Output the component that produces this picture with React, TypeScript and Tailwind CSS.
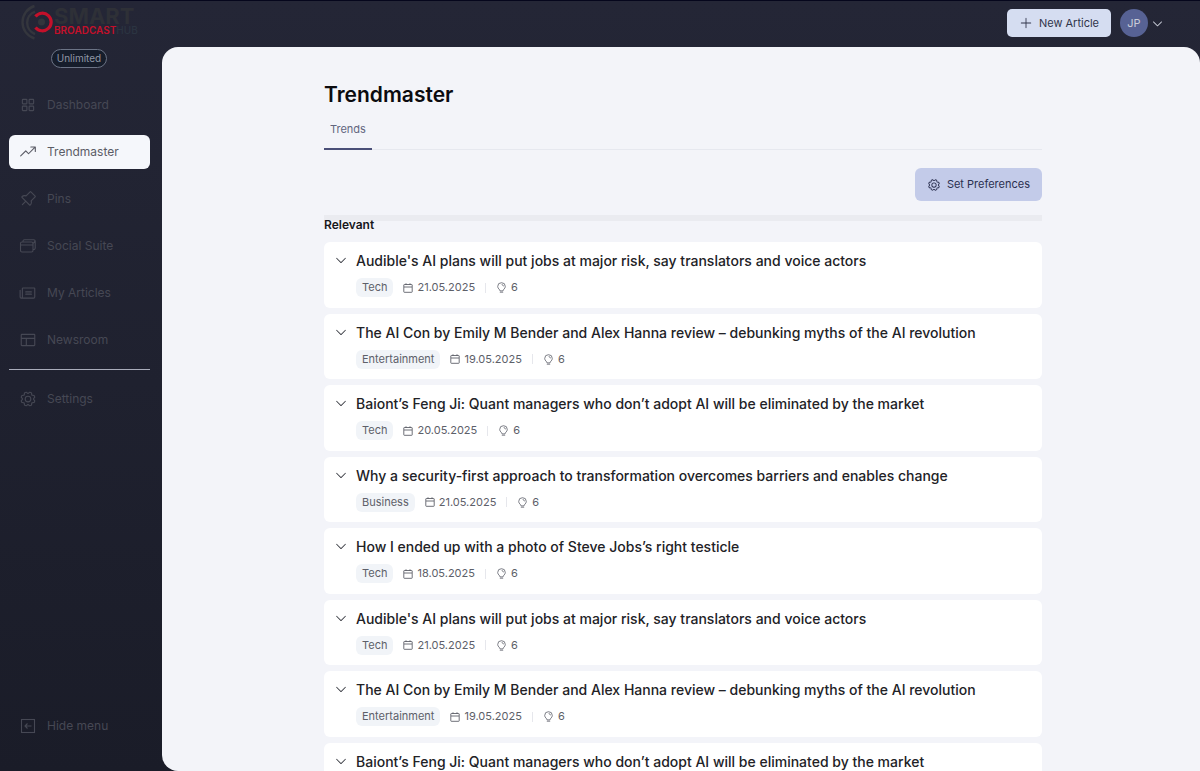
import type { ReactNode } from "react";
import {
  PiSquaresFour,
  PiTrendUp,
  PiPushPin,
  PiNewspaper,
  PiLayout,
  PiGear,
  PiPlus,
  PiCaretDown,
} from "react-icons/pi";

type Story = { title: string; category: string; date: string; count: number };

const audible: Story = {
  title: "Audible's AI plans will put jobs at major risk, say translators and voice actors",
  category: "Tech",
  date: "21.05.2025",
  count: 6,
};
const aiCon: Story = {
  title: "The AI Con by Emily M Bender and Alex Hanna review – debunking myths of the AI revolution",
  category: "Entertainment",
  date: "19.05.2025",
  count: 6,
};
const baiont: Story = {
  title: "Baiont’s Feng Ji: Quant managers who don’t adopt AI will be eliminated by the market",
  category: "Tech",
  date: "20.05.2025",
  count: 6,
};
const stories: Story[] = [
  audible,
  aiCon,
  baiont,
  {
    title: "Why a security-first approach to transformation overcomes barriers and enables change",
    category: "Business",
    date: "21.05.2025",
    count: 6,
  },
  { title: "How I ended up with a photo of Steve Jobs’s right testicle", category: "Tech", date: "18.05.2025", count: 6 },
  audible,
  aiCon,
  baiont,
];

function WindowsIcon() {
  return (
    <svg className="size-[18px]" viewBox="0 0 18 18" fill="none" stroke="currentColor" strokeWidth="1.1" strokeLinejoin="round" aria-hidden="true">
      <rect x="1.500" y="5" width="12.500" height="10" rx="1.500" />
      <path d="M4 5V4.200A1.500 1.500 0 0 1 5.500 2.700H14.700A1.500 1.500 0 0 1 16.200 4.200V11A1.500 1.500 0 0 1 14.700 12.500H14M1.500 8H14M14 6.500L16 4" />
    </svg>
  );
}

function CollapseIcon() {
  return (
    <svg className="size-[18px]" viewBox="0 0 18 18" fill="none" stroke="currentColor" strokeWidth="1.100" aria-hidden="true">
      <rect x="2.500" y="2.500" width="13" height="13" />
      <path d="M12.500 9H6M8.500 6.500L6 9l2.500 2.500" />
    </svg>
  );
}

function CalendarIcon() {
  return (
    <svg className="size-[10px]" viewBox="0 0 10 10" fill="none" stroke="currentColor" strokeWidth="0.9" aria-hidden="true">
      <rect x="0.800" y="1.500" width="8.400" height="7.800" rx="0.500" />
      <path d="M1 4H9M3 0.300V2M7 0.300V2" />
    </svg>
  );
}

function BulbIcon() {
  return (
    <svg className="size-[11px]" viewBox="0 0 11 11" fill="none" stroke="currentColor" strokeWidth="0.800" strokeLinecap="round" aria-hidden="true">
      <path d="M4 8.500C4 7.400 1.700 6.700 1.700 4.500A3.800 3.800 0 0 1 9.300 4.500C9.300 6.700 7 7.400 7 8.500ZM4.200 10.200H6.800M6 2.500A1.900 1.900 0 0 1 7.500 4" />
    </svg>
  );
}

function Logo() {
  return (
    <svg className="h-9 w-[118px] overflow-visible" viewBox="0 0 118 36" role="img" aria-label="Smart Broadcast Hub">
      <g fill="none" stroke="#34363d" strokeWidth="2.400">
        <path d="M13.500 1A17 17 0 0 0 13.500 33.500" />
        <path d="M14 6.500A12 12 0 0 0 14 29" />
      </g>
      <circle cx="20.500" cy="17" r="3.500" fill="#33353c" />
      <path d="M14.500 11.500A8.800 8.800 0 1 1 14.500 22.500" fill="none" stroke="#c4102a" strokeWidth="3.200" />
      <text x="33" y="19" fontFamily="Inter, sans-serif" fontSize="22" fontWeight="700" fill="#2e3037">
        SMART
      </text>
      <text x="33" y="29" fontFamily="Inter, sans-serif" fontSize="10" fontWeight="600" fill="#c4102a">
        BROADCAST
        <tspan fill="#2b3441" fontWeight="500">HUB</tspan>
      </text>
    </svg>
  );
}

function NavItem({ icon, label, active = false }: { icon: ReactNode; label: string; active?: boolean }) {
  return (
    <a
      href="#"
      aria-current={active ? "page" : undefined}
      className={
        active
          ? "flex h-[34px] items-center gap-2.5 rounded-md bg-[#f5f7fb] px-2.5 text-[12px] text-[#5b5c66]"
          : "flex h-[34px] items-center gap-2.5 rounded-md px-2.5 text-[12px] text-[#464854]"
      }
    >
      <span className="text-[18px]">{icon}</span>
      <span>{label}</span>
    </a>
  );
}

function StoryCard({ story }: { story: Story }) {
  return (
    <li className="flex gap-2 rounded-md bg-white px-2.5 py-2.5">
      <button type="button" aria-label={`Expand ${story.title}`} className="h-4 text-[14px] text-[#33353d]">
        <PiCaretDown aria-hidden="true" />
      </button>
      <div className="flex min-w-0 flex-col gap-2">
        <h3 className="text-sm leading-tight font-medium text-[#222226]">{story.title}</h3>
        <div className="flex h-5 items-center gap-2.5 text-[11px] text-[#5d6069]">
          <span className="flex h-[19px] items-center rounded-md bg-[#f1f4f8] px-1.5">{story.category}</span>
          <span className="flex items-center gap-1">
            <CalendarIcon />
            <time>{story.date}</time>
          </span>
          <span className="h-2.5 w-px bg-[#e6e7ec]" />
          <span className="flex items-center gap-1">
            <BulbIcon />
            {story.count}
          </span>
        </div>
      </div>
    </li>
  );
}

export default function App() {
  return (
    <div className="flex h-screen overflow-hidden border-t border-[#05061c] bg-linear-to-b from-[#242636] to-[#1a1c28] font-['Inter',sans-serif]">
      <aside className="flex w-[162px] shrink-0 flex-col px-[9px] pt-1 pb-7">
        <div className="pl-3">
          <Logo />
        </div>
        <div className="mt-2 flex justify-center pr-1">
          <span className="flex h-[19px] items-center rounded-full border border-[#6b7385] bg-[#161d2b] px-[5px] text-[10px] text-[#8f96a5]">
            Unlimited
          </span>
        </div>
        <nav aria-label="Main" className="mt-5 flex flex-1 flex-col pr-[3px]">
          <div className="flex flex-col gap-[13px] border-b border-[#a9acba] pb-3">
            <NavItem icon={<PiSquaresFour />} label="Dashboard" />
            <NavItem icon={<PiTrendUp />} label="Trendmaster" active />
            <NavItem icon={<PiPushPin />} label="Pins" />
            <NavItem icon={<WindowsIcon />} label="Social Suite" />
            <NavItem icon={<PiNewspaper />} label="My Articles" />
            <NavItem icon={<PiLayout />} label="Newsroom" />
          </div>
          <div className="mt-3">
            <NavItem icon={<PiGear />} label="Settings" />
          </div>
          <button type="button" className="mt-auto flex h-[34px] items-center gap-2.5 px-2.5 text-[12px] text-[#464854]">
            <CollapseIcon />
            Hide menu
          </button>
        </nav>
      </aside>
      <div className="flex min-w-0 flex-1 flex-col">
        <header className="flex h-[46px] shrink-0 items-center justify-end gap-[9px] pr-9 pb-0.5">
          <button type="button" className="flex h-7 items-center gap-1.5 rounded-[5px] bg-[#d5ddf1] px-3 text-[11px] text-[#30344a]">
            <PiPlus className="text-[14px]" aria-hidden="true" />
            New Article
          </button>
          <button type="button" aria-label="Account menu" className="flex items-center gap-[3px] text-[#c9ccd8]">
            <span className="flex size-7 items-center justify-center rounded-full bg-[#576294] text-[11px]">JP</span>
            <PiCaretDown className="text-[13px]" aria-hidden="true" />
          </button>
        </header>
        <main className="min-h-0 flex-1 overflow-hidden rounded-l-2xl rounded-tr-2xl bg-[#f3f4f9] pt-[34px] pl-1">
          <div className="mx-auto max-w-[718px]">
            <h1 className="text-[21px] leading-7 font-semibold text-[#0b0b0f]">Trendmaster</h1>
            <div role="tablist" className="mt-[7px] flex border-b border-[#e6e8ef]">
              <button
                type="button"
                role="tab"
                aria-selected="true"
                className="-mb-px flex h-[34px] border-b-2 border-[#4a4f78] px-1.5 pt-[5px] text-[11px] leading-4 text-[#62667f]"
              >
                Trends
              </button>
            </div>
            <div className="mt-[18px] flex justify-end">
              <button type="button" className="flex h-[33px] items-center gap-1.5 rounded-md bg-[#c3cbe9] px-3 text-[11px] text-[#2b3050]">
                <PiGear className="text-[14px]" aria-hidden="true" />
                Set Preferences
              </button>
            </div>
            <section className="mt-[14px] border-t-[6px] border-[#eaebf0]">
              <h2 className="text-xs leading-[8px] font-semibold text-[#17171b]">Relevant</h2>
              <ul className="mt-[13px] flex flex-col gap-1.5">
                {stories.map((story, i) => (
                  <StoryCard key={i} story={story} />
                ))}
              </ul>
            </section>
          </div>
        </main>
      </div>
    </div>
  );
}
